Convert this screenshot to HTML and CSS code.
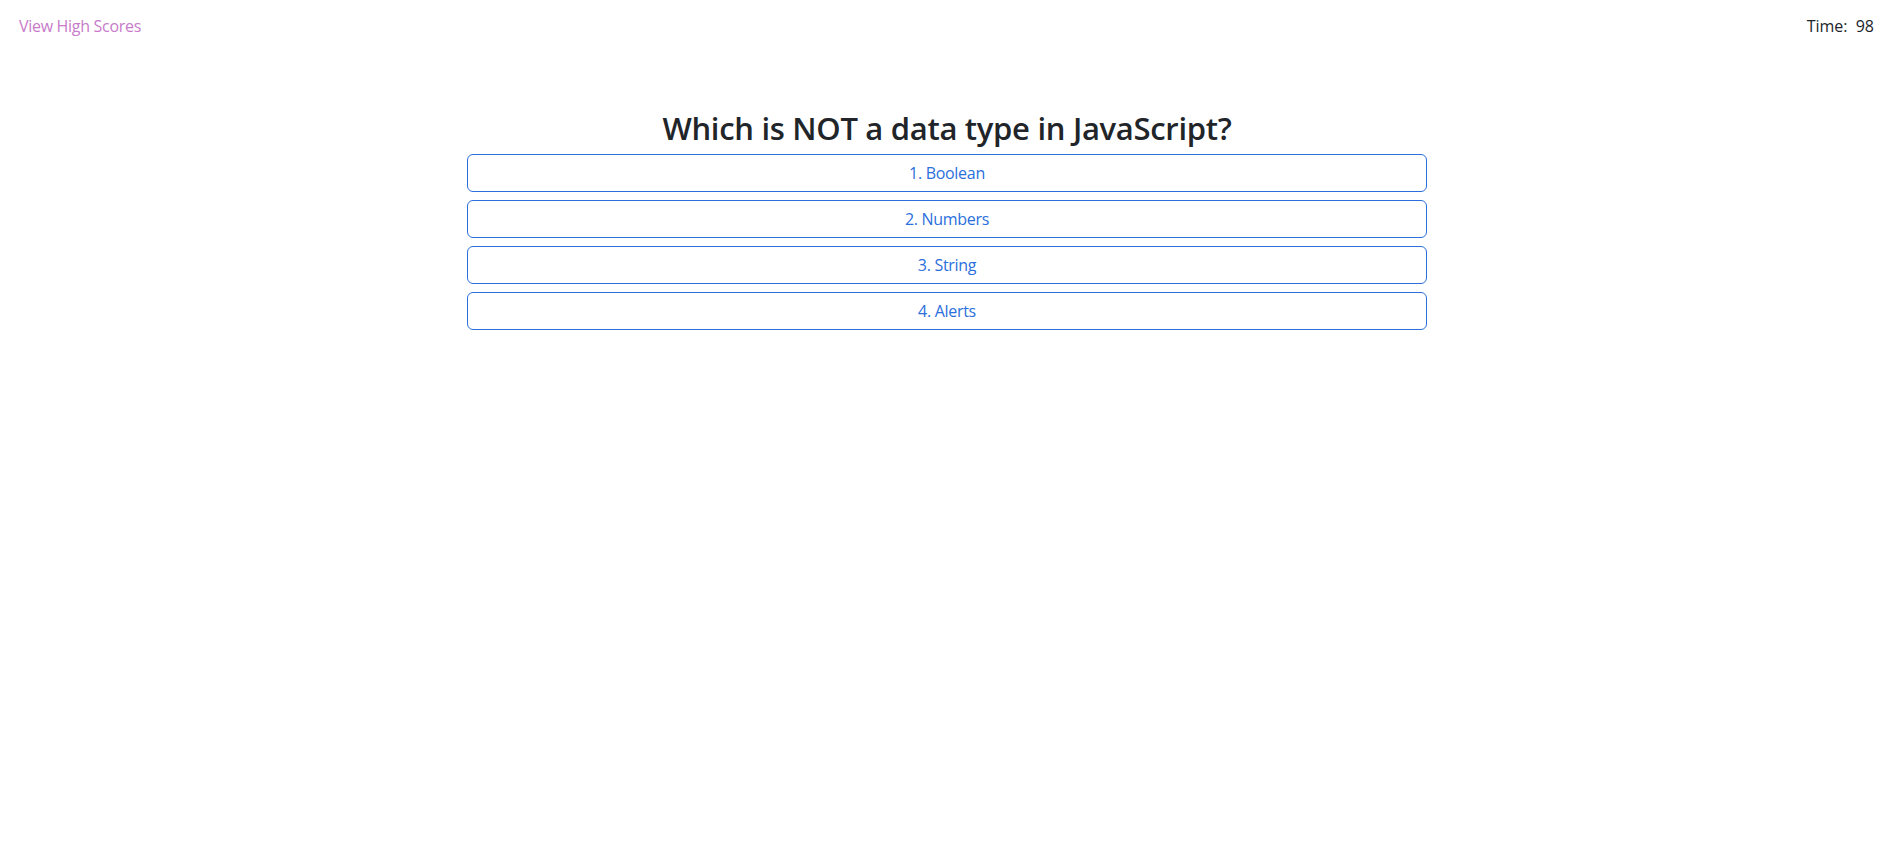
FILE: index.html
```html
<!DOCTYPE html>
<html lang="en">
<head>
<meta charset="utf-8">
<title>Code Quiz</title>
<link rel="stylesheet" href="styles.css">
</head>
<body>
<header class="topbar">
  <a class="scores-link" href="#">View High Scores</a>
  <div class="timer">Time: <span class="timer-value">98</span></div>
</header>
<main class="quiz">
  <h2 class="question">Which is NOT a data type in JavaScript?</h2>
  <div class="choices">
    <button class="choice" type="button">1. Boolean</button>
    <button class="choice" type="button">2. Numbers</button>
    <button class="choice" type="button">3. String</button>
    <button class="choice" type="button">4. Alerts</button>
  </div>
</main>
</body>
</html>
```

FILE: styles.css
```css
* {
  box-sizing: border-box;
}

html, body {
  margin: 0;
  padding: 0;
  background: #ffffff;
}

body {
  font-family: "Open Sans", "Noto Sans", "Liberation Sans", sans-serif;
  font-size: 16px;
  line-height: 24px;
  color: #212529;
}

.topbar {
  display: flex;
  justify-content: space-between;
  align-items: flex-start;
  padding: 14px 24px 0 19px;
}

.scores-link {
  color: #c77bc9;
  text-decoration: none;
  letter-spacing: -0.3px;
}

.timer-value {
  margin-left: 4px;
}

.quiz {
  width: 960px;
  margin: 0 auto;
  padding-top: 71px;
  position: relative;
  left: -2px;
}

.question {
  margin: 0 0 7px;
  font-size: 31px;
  line-height: 38px;
  font-weight: 600;
  letter-spacing: -0.3px;
  text-align: center;
  color: #212529;
}

.choices {
  display: flex;
  flex-direction: column;
  gap: 8px;
}

.choice {
  display: block;
  width: 100%;
  height: 38px;
  padding: 6px 12px;
  font-family: inherit;
  font-size: 16px;
  line-height: 24px;
  letter-spacing: -0.3px;
  color: #2a6fdb;
  background: #ffffff;
  border: 1px solid #2a6fdb;
  border-radius: 6px;
  text-align: center;
  cursor: pointer;
}
```
